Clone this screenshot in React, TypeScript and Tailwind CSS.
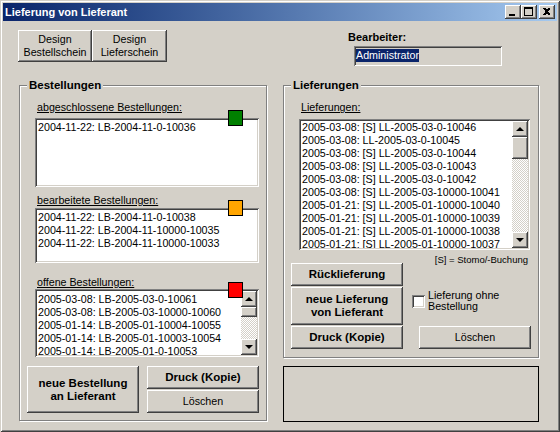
import type { ReactNode } from 'react';

const raised =
  'shadow-[inset_-1px_-1px_0_#404040,inset_1px_1px_0_#ffffff,inset_-2px_-2px_0_#808080,inset_2px_2px_0_#d4d0c8]';
const sunken =
  'shadow-[inset_1px_1px_0_#808080,inset_-1px_-1px_0_#ffffff,inset_2px_2px_0_#404040,inset_-2px_-2px_0_#d4d0c8]';
const etched = 'border border-[#808080] shadow-[inset_1px_1px_0_#ffffff,1px_1px_0_#ffffff]';

function Btn({ children, className, bold }: { children: ReactNode; className: string; bold?: boolean }) {
  return (
    <div
      className={`${raised} ${className} bg-[#d4d0c8] flex items-center justify-center text-center leading-[13px] ${
        bold ? 'font-bold text-[11.5px]' : 'text-[10.7px]'
      }`}
    >
      <div>{children}</div>
    </div>
  );
}

function Arrow({ up }: { up?: boolean }) {
  return (
    <div className={`${raised} h-[16px] bg-[#d4d0c8] flex items-center justify-center`}>
      {up ? (
        <div className="w-0 h-0 border-x-[4px] border-x-transparent border-b-[4px] border-b-black" />
      ) : (
        <div className="w-0 h-0 border-x-[4px] border-x-transparent border-t-[4px] border-t-black" />
      )}
    </div>
  );
}

function ScrollBar({ thumb }: { thumb: number }) {
  return (
    <div className="w-[16px] h-full flex flex-col shrink-0">
      <Arrow up />
      <div className="flex-1 bg-[image:repeating-conic-gradient(#d4d0c8_0_25%,#ffffff_0_50%)] bg-[length:2px_2px]">
        <div className={`${raised} bg-[#d4d0c8]`} style={{ height: thumb }} />
      </div>
      <Arrow />
    </div>
  );
}

function ListBox({
  items,
  className,
  thumb,
  padTop,
}: {
  items: string[];
  className: string;
  thumb?: number;
  padTop: string;
}) {
  return (
    <div className={`${sunken} ${className} bg-white p-[2px] flex overflow-hidden`}>
      <div className={`flex-1 pl-[1px] ${padTop} overflow-hidden text-[10.7px] leading-[13px] whitespace-nowrap`}>
        {items.map((it, i) => (
          <div key={i}>{it}</div>
        ))}
      </div>
      {thumb !== undefined && <ScrollBar thumb={thumb} />}
    </div>
  );
}

function Square({ color, top }: { color: string; top: string }) {
  return <div className={`absolute left-[193px] ${top} w-[15px] h-[16px] border border-black z-10 ${color}`} />;
}

function GroupLabel({ children }: { children: ReactNode }) {
  return (
    <div className="absolute left-[7px] -top-[7px] px-[2px] bg-[#d4d0c8] font-bold text-[11.5px] leading-[13px]">
      {children}
    </div>
  );
}

function TitleButton({ kind }: { kind: 'min' | 'max' | 'close' }) {
  return (
    <div className={`${raised} w-[16px] h-[14px] bg-[#d4d0c8]`}>
      <svg width="16" height="14" viewBox="0 0 16 14" shapeRendering="crispEdges">
        {kind === 'min' && <rect x="4" y="9" width="6" height="2" fill="#000" />}
        {kind === 'max' && (
          <path d="M3 2h9v9H3z M4 4v6h7V4z" fill="#000" fillRule="evenodd" />
        )}
        {kind === 'close' && (
          <path
            d="M4 3h2l1.5 1.5L9 3h2v1L9 6v1l2 2v1H9L7.5 8.5 6 10H4V9l2-2V6L4 4z"
            fill="#000"
          />
        )}
      </svg>
    </div>
  );
}

const closed = ['2004-11-22: LB-2004-11-0-10036'];
const inWork = [
  '2004-11-22: LB-2004-11-0-10038',
  '2004-11-22: LB-2004-11-10000-10035',
  '2004-11-22: LB-2004-11-10000-10033',
];
const open = [
  '2005-03-08: LB-2005-03-0-10061',
  '2005-03-08: LB-2005-03-10000-10060',
  '2005-01-14: LB-2005-01-10004-10055',
  '2005-01-14: LB-2005-01-10003-10054',
  '2005-01-14: LB-2005-01-0-10053',
];
const deliveries = [
  '2005-03-08: [S] LL-2005-03-0-10046',
  '2005-03-08: LL-2005-03-0-10045',
  '2005-03-08: [S] LL-2005-03-0-10044',
  '2005-03-08: [S] LL-2005-03-0-10043',
  '2005-03-08: [S] LL-2005-03-0-10042',
  '2005-03-08: [S] LL-2005-03-10000-10041',
  '2005-01-21: [S] LL-2005-01-10000-10040',
  '2005-01-21: [S] LL-2005-01-10000-10039',
  '2005-01-21: [S] LL-2005-01-10000-10038',
  '2005-01-21: [S] LL-2005-01-10000-10037',
];

export default function App() {
  return (
    <div
      className="w-[560px] h-[432px] bg-[#d4d0c8] p-[3px] flex flex-col text-black overflow-hidden shadow-[inset_1px_1px_0_#d4d0c8,inset_-1px_-1px_0_#404040,inset_2px_2px_0_#ffffff,inset_-2px_-2px_0_#808080]"
      style={{ fontFamily: '"Liberation Sans", Arial, sans-serif' }}
    >
      {/* title bar */}
      <div className="h-[18px] shrink-0 flex items-center bg-gradient-to-r from-[#0a246a] to-[#a6caf0] pl-[2px] pr-[2px]">
        <div className="flex-1 text-white font-bold text-[11px] leading-[13px]">Lieferung von Lieferant</div>
        <TitleButton kind="min" />
        <TitleButton kind="max" />
        <div className="w-[2px]" />
        <TitleButton kind="close" />
      </div>

      {/* top row */}
      <div className="flex h-[36px] mt-[9px] shrink-0">
        <div className="flex ml-[15px] h-[32px]">
          <Btn className="w-[74px] h-[32px]">
            Design
            <br />
            Bestellschein
          </Btn>
          <Btn className="w-[75px] h-[32px]">
            Design
            <br />
            Lieferschein
          </Btn>
        </div>
        <div className="ml-[181px] flex flex-col">
          <div className="font-bold text-[11px] leading-[13px] mt-[1px]">Bearbeiter:</div>
          <div className={`${sunken} ml-[6px] mt-[2px] w-[148px] h-[20px] p-[2px] flex items-start`}>
            <span className="mt-[1px] bg-[#0a246a] text-white text-[10.7px] leading-[13px]">Administrator</span>
          </div>
        </div>
      </div>

      {/* groups */}
      <div className="flex mt-[19px]">
        {/* Bestellungen */}
        <div className={`${etched} relative ml-[16px] w-[248px] h-[336px] pl-[7px] pt-[15px] flex flex-col`}>
          <GroupLabel>Bestellungen</GroupLabel>
          <div className="ml-[10px] underline text-[10.7px] leading-[13px]">abgeschlossene Bestellungen:</div>
          <div className="relative ml-[8px] mt-[4px]">
            <Square color="bg-[#008000]" top="-top-[8px]" />
            <ListBox items={closed} className="w-[224px] h-[69px]" padTop="pt-[1px]" />
          </div>
          <div className="ml-[10px] mt-[7px] underline text-[10.7px] leading-[13px]">bearbeitete Bestellungen:</div>
          <div className="relative ml-[8px] mt-[1px]">
            <Square color="bg-[#ffa500]" top="-top-[8px]" />
            <ListBox items={inWork} className="w-[224px] h-[55px]" padTop="pt-[1px]" />
          </div>
          <div className="ml-[10px] mt-[13px] underline text-[10.7px] leading-[13px]">offene Bestellungen:</div>
          <div className="relative ml-[8px]">
            <Square color="bg-[#ff0000]" top="-top-[7px]" />
            <ListBox items={open} className="w-[224px] h-[68px]" thumb={10} padTop="pt-[2px]" />
          </div>
          <div className="flex gap-[8px] mt-[9px]">
            <Btn bold className="w-[112px] h-[47px]">
              neue Bestellung
              <br />
              an Lieferant
            </Btn>
            <div className="flex flex-col gap-[1px]">
              <Btn bold className="w-[112px] h-[23px]">
                Druck (Kopie)
              </Btn>
              <Btn className="w-[112px] h-[23px]">Löschen</Btn>
            </div>
          </div>
        </div>

        {/* Lieferungen */}
        <div className="ml-[16px] flex flex-col">
          <div className={`${etched} relative w-[256px] h-[273px] pl-[7px] pt-[15px] flex flex-col`}>
            <GroupLabel>Lieferungen</GroupLabel>
            <div className="ml-[10px] underline text-[10.7px] leading-[13px]">Lieferungen:</div>
            <ListBox
              items={deliveries}
              className="ml-[8px] mt-[5px] w-[231px] h-[131px]"
              thumb={22}
              padTop="pt-0"
            />
            <div className="flex">
              <div className="mt-[13px] w-[112px] flex flex-col gap-[1px]">
                <Btn bold className="w-[112px] h-[23px]">
                  Rücklieferung
                </Btn>
                <Btn bold className="w-[112px] h-[38px]">
                  neue Lieferung
                  <br />
                  von Lieferant
                </Btn>
                <Btn bold className="w-[112px] h-[23px]">
                  Druck (Kopie)
                </Btn>
              </div>
              <div className="flex-1 flex flex-col">
                <div className="mt-[3px] pr-[10px] text-right text-[9.5px] leading-[13px]">[S] = Stomo/-Buchung</div>
                <div className="mt-[24px] ml-[9px] flex items-center">
                  <div className={`${sunken} w-[13px] h-[13px] bg-white`} />
                  <div className="ml-[3px] text-[10.7px] leading-[11px]">
                    Lieferung ohne
                    <br />
                    Bestellung
                  </div>
                </div>
                <Btn className="mt-[14px] ml-[16px] w-[112px] h-[23px]">Löschen</Btn>
              </div>
            </div>
          </div>
          <div className="mt-[8px] w-[256px] h-[56px] border border-black" />
        </div>
      </div>
    </div>
  );
}
